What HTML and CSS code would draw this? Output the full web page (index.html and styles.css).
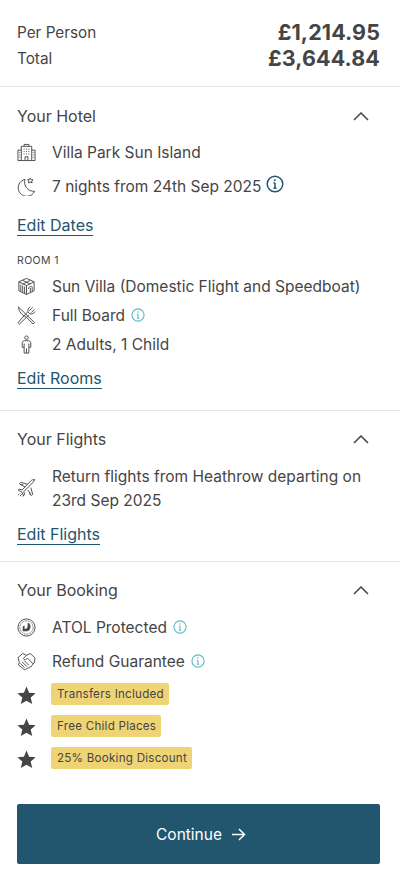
FILE: index.html
```html
<!DOCTYPE html>
<html lang="en">
<head>
<meta charset="utf-8">
<title>Booking summary</title>
<link rel="stylesheet" href="styles.css">
</head>
<body>
<main class="summary">
  <section class="prices">
    <div class="price-row"><span>Per Person</span><strong>£1,214.95</strong></div>
    <div class="price-row"><span>Total</span><strong>£3,644.84</strong></div>
  </section>

  <section class="panel hotel">
    <header class="panel-head"><h2>Your Hotel</h2>
      <svg class="chev" viewBox="0 0 16 9"><path d="M1 8l7-7 7 7"/></svg></header>
    <div class="row r-name">
      <svg class="ic" viewBox="0 0 20 20"><path d="M1 18.500h18V7.500h-3.500M1 18.500V7.500h3.500M4.500 18.500V3.500h11v15M7.500 3.500V1.500h5v2M8.500 18.500v-4h3v4M7 6.500h1M9.500 6.500h1M12 6.500h1M7 9h1M9.500 9h1M12 9h1M7 11.500h1M9.500 11.500h1M12 11.500h1M2.500 10h.8M2.500 12.500h.8M2.500 15h.8M16.700 10h.8M16.700 12.500h.8M16.700 15h.8"/></svg>
      <span>Villa Park Sun Island</span></div>
    <div class="row r-nights">
      <svg class="ic" viewBox="0 0 20 20"><path d="M8.500 2.500A9 9 0 1 0 18.500 15 A9.500 9.500 0 0 1 8.500 2.500z"/><path d="M14 1l.9 1.800 2 .2-1.500 1.300.5 2-1.900-1-1.900 1 .5-2-1.500-1.300 2-.2z"/></svg>
      <span>7 nights from 24th Sep 2025</span>
      <svg class="info info-dark" viewBox="0 0 18 18"><circle cx="9" cy="9" r="7.800"/><path d="M9 8v5.200M7.500 8H9M7.500 13.200h3"/><circle class="dot" cx="8.800" cy="5.200" r="1"/></svg>
    </div>
    <a class="edit e-dates" href="#">Edit Dates</a>
    <div class="room-label">ROOM 1</div>
    <div class="row r-villa">
      <svg class="ic" viewBox="0 0 20 20"><path d="M10 1.500l8 3.500v9.500l-8 4-8-4V5zM2 5l8 4 8-4M10 9v9.500M4 8v7M6 9v7.500M8 10v7.500M12 12.500c0-2 4-4 4-1.500v4M14 11.500v5M6 3.500l8 4M14 3.500l-8 4"/></svg>
      <span>Sun Villa (Domestic Flight and Speedboat)</span></div>
    <div class="row r-board">
      <svg class="ic" viewBox="0 0 20 20"><path d="M1.500 1l17 16.500-1.500 1.500-7.500-7.500C5 9.500 2 6 1.500 1zM18.500 3.500l-3.500 3.500M16.500 1.500L13 5M14 .8c-2 1.200-3 3.500-2.500 5.500l2 2c2 .5 4.500-.5 5.700-2.500M11 6.500L1 17.500 2.500 19l10-9.500"/></svg>
      <span>Full Board</span>
      <svg class="info info-teal" viewBox="0 0 18 18"><circle cx="9" cy="9" r="7.800"/><path d="M9 8v5.200M7.500 8H9M7.500 13.200h3"/><circle class="dot" cx="8.800" cy="5.200" r="1"/></svg>
    </div>
    <div class="row r-guests">
      <svg class="ic" viewBox="0 0 20 20"><circle cx="10" cy="2.800" r="1.800"/><path d="M8 6h4c1.500 0 2.500 1 2.500 2.500V13h-2v6h-5v-6h-2V8.500C5.500 7 6.500 6 8 6zM7.500 9v4M12.500 9v4M10 14v5"/></svg>
      <span>2 Adults, 1 Child</span></div>
    <a class="edit e-rooms" href="#">Edit Rooms</a>
  </section>

  <section class="panel flights">
    <header class="panel-head"><h2>Your Flights</h2>
      <svg class="chev" viewBox="0 0 16 9"><path d="M1 8l7-7 7 7"/></svg></header>
    <div class="row r-flight">
      <svg class="ic" viewBox="0 0 20 20"><path d="M19 1c-1.700-.7-3.500 0-4.500 1L5.500 11.500l-3-.8-1.300 1 3.800 2 2 3.800 1-1.300-.8-3 9-9c1-1 2.200-2.900 1.800-3.200zM11 5.500L4 3.500 2.500 5l6 3.500M14.500 9l2 7-1.500 1.500-3.500-6M4 5.800l2.500.2M13.500 14l.2 2.500M2.500 15.500L1 17M6 18.500l1-2M3 18l2-2"/></svg>
      <span class="wrap">Return flights from Heathrow departing on<br>23rd Sep 2025</span></div>
    <a class="edit e-flights" href="#">Edit Flights</a>
  </section>

  <section class="panel booking">
    <header class="panel-head"><h2>Your Booking</h2>
      <svg class="chev" viewBox="0 0 16 9"><path d="M1 8l7-7 7 7"/></svg></header>
    <div class="row r-atol">
      <svg class="ic" viewBox="0 0 20 20"><circle cx="10" cy="10" r="9"/><circle cx="10" cy="10" r="7" stroke-dasharray="1 .8"/><path class="solid" d="M6 14V9l2-1.200v3.700c2 0 3.200-1 3.200-3.200V5c2 .5 3 2 3 4 0 3-1.700 5-4.200 5z"/></svg>
      <span>ATOL Protected</span>
      <svg class="info info-teal" viewBox="0 0 18 18"><circle cx="9" cy="9" r="7.800"/><path d="M9 8v5.200M7.500 8H9M7.500 13.200h3"/><circle class="dot" cx="8.800" cy="5.200" r="1"/></svg>
    </div>
    <div class="row r-refund">
      <svg class="ic" viewBox="0 0 20 20"><path d="M6 1.500L1 6l1.500 5-1 2.500 6 5c1 .5 2 0 2-1 1 .5 2 0 2.200-1 1 .5 2 0 2-1 1 .5 2.500-.5 2-1.500l2.300-2.500 1-5L14 1.500l-4 2zM10 3.500L7 6.500c-.5 1 1 2 2 1.500l2-1.500 6 6M3.500 12l4.500 4.500M5.500 10.500l5 5M7.500 9l5 5"/></svg>
      <span>Refund Guarantee</span>
      <svg class="info info-teal" viewBox="0 0 18 18"><circle cx="9" cy="9" r="7.800"/><path d="M9 8v5.200M7.500 8H9M7.500 13.200h3"/><circle class="dot" cx="8.800" cy="5.200" r="1"/></svg>
    </div>
    <div class="row r-tag">
      <svg class="star" viewBox="0 0 20 20"><path d="M10 .5l2.700 6.500 7 .6-5.300 4.600 1.600 6.800-6-3.600-6 3.600 1.600-6.800L.3 7.600l7-.6z"/></svg>
      <span class="tag">Transfers Included</span></div>
    <div class="row r-tag">
      <svg class="star" viewBox="0 0 20 20"><path d="M10 .5l2.700 6.500 7 .6-5.300 4.600 1.600 6.800-6-3.600-6 3.600 1.600-6.800L.3 7.600l7-.6z"/></svg>
      <span class="tag">Free Child Places</span></div>
    <div class="row r-tag">
      <svg class="star" viewBox="0 0 20 20"><path d="M10 .5l2.700 6.500 7 .6-5.300 4.600 1.600 6.800-6-3.600-6 3.600 1.600-6.800L.3 7.600l7-.6z"/></svg>
      <span class="tag">25% Booking Discount</span></div>
    <button class="continue" type="button">Continue
      <svg viewBox="0 0 16 14"><path d="M1 7h13.500M8.500 1l6 6-6 6"/></svg></button>
  </section>
</main>
</body>
</html>
```

FILE: styles.css
```css
* { box-sizing: border-box; }
html, body { margin: 0; padding: 0; background: #fff; }
body {
  width: 400px;
  height: 882px;
  overflow: hidden;
  font-family: Inter, "Liberation Sans", sans-serif;
  font-size: 15.500px;
  color: #454545;
}
.summary { display: flex; flex-direction: column; }
.prices { height: 87px; padding: 19px 20px 0 17px; border-bottom: 1px solid #e4e4e4; }
.price-row { display: flex; justify-content: space-between; align-items: center; height: 26px; }
.price-row span { font-size: 15.300px; }
.price-row strong { font-size: 21.500px; font-weight: 700; letter-spacing: 0.1px; }
.panel { padding: 0 17px; display: flex; flex-direction: column; border-bottom: 1px solid #e4e4e4; }
.hotel { height: 324px; }
.flights { height: 151px; }
.booking { border-bottom: 0; }
.panel-head { display: flex; justify-content: space-between; align-items: center; height: 20px; margin-top: 19px; padding-right: 14px; }
.flights .panel-head, .booking .panel-head { margin-top: 18px; }
h2 { margin: 0; font-size: 16px; font-weight: 400; }
.chev { width: 16px; height: 9px; fill: none; stroke: #454545; stroke-width: 1.500; }
.row { display: flex; align-items: center; height: 24px; }
.row > span:not(.tag) { margin-left: 16px; line-height: 24px; padding-top: 1px; }
.ic { width: 19px; height: 19px; flex: none; fill: none; stroke: #4a4a4a; stroke-width: 1; }
.ic .solid { fill: #4a4a4a; stroke: none; }
.info { flex: none; fill: none; stroke-width: 1.500; }
.info .dot { stroke: none; }
.info-dark { width: 18px; height: 18px; margin-left: 5px; margin-top: -4px; stroke: #22556e; }
.info-dark .dot { fill: #22556e; }
.info-teal { width: 14px; height: 14px; margin-left: 6px; stroke: #62bcc6; }
.info-teal .dot { fill: #62bcc6; }
.edit { align-self: flex-start; color: #22556e; text-decoration: none; border-bottom: 1px solid #22556e; font-size: 16px; line-height: 20px; height: 21px; }
.room-label { font-size: 10.500px; letter-spacing: 0.4px; line-height: 14px; margin-top: 18px; }
.r-name { margin-top: 14px; }
.r-nights { margin-top: 10px; }
.e-dates { margin-top: 17px; }
.r-villa { margin-top: 6px; }
.r-board { margin-top: 5px; }
.r-guests { margin-top: 5px; }
.e-rooms { margin-top: 12px; }
.r-flight { margin-top: 15px; height: 48px; }
.wrap { line-height: 24px; }
.e-flights { margin-top: 12px; }
.r-atol { margin-top: 15px; }
.r-refund { margin-top: 10px; }
.r-refund + .r-tag { margin-top: 9px; }
.r-tag { margin-top: 8px; }
.star { width: 19px; height: 19px; flex: none; fill: #454545; margin-top: 2px; }
.tag { margin-left: 15px; background: #efd475; border-radius: 2px; font-size: 11.600px; line-height: 22px; height: 22px; padding: 0 5px 0 6px; letter-spacing: 0.25px; }
.continue { margin-top: 34px; height: 60px; width: 363px; padding: 0 0 0 5px; background: #22556e; color: #fff; border: 0; border-radius: 2px; font: 400 15.500px Inter, "Liberation Sans", sans-serif; display: flex; align-items: center; justify-content: center; gap: 9px; }
.continue svg { width: 15px; height: 13px; fill: none; stroke: #fff; stroke-width: 1.600; }
```
